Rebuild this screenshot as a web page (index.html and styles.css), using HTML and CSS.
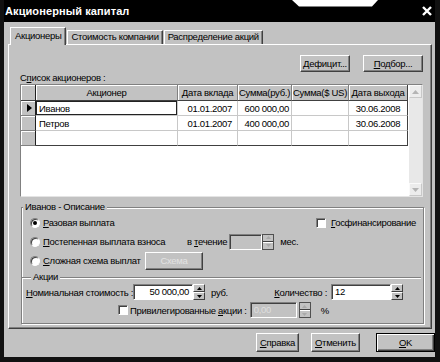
FILE: index.html
```html
<!DOCTYPE html>
<html>
<head>
    <meta charset="utf-8">
    <title>Акционерный капитал</title>
    <link rel="stylesheet" href="styles.css">
</head>
<body>
<div class="window">
    <div class="titlebar">
        <span class="title">Акционерный капитал</span>
        <svg class="close" width="10" height="10" viewBox="0 0 10 10"><path d="M1 1 L9 9 M9 1 L1 9" stroke="#fff" stroke-width="2.4"/></svg>
    </div>
    <svg class="notch" width="86" height="7" viewBox="0 0 86 7"><polygon points="0,0 86,0 80,6.5 7,6.5" fill="#fff"/></svg>

    <div class="tabs">
        <div class="tab active">Акционеры</div>
        <div class="tab">Стоимость компании</div>
        <div class="tab">Распределение акций</div>
    </div>

    <div class="panel">
        <div class="toolbar">
            <button class="btn btn-deficit">Дефицит...</button>
            <button class="btn btn-select"><u>П</u>одбор...</button>
        </div>
        <div class="list-label">С<u>п</u>исок акционеров :</div>

        <div class="grid-box">
            <table class="grid">
                <colgroup>
                    <col style="width:15px">
                    <col style="width:142px">
                    <col style="width:60px">
                    <col style="width:54px">
                    <col style="width:57px">
                    <col style="width:59px">
                </colgroup>
                <thead>
                    <tr>
                        <th class="ind"></th>
                        <th>Акционер</th>
                        <th>Дата вклада</th>
                        <th>Сумма(руб.)</th>
                        <th>Сумма($ US)</th>
                        <th class="last">Дата выхода</th>
                    </tr>
                </thead>
                <tbody>
                    <tr>
                        <td class="ind"><svg width="5" height="8" viewBox="0 0 5 8"><polygon points="0,0 5,4 0,8" fill="#000"/></svg></td>
                        <td class="name focus">Иванов</td>
                        <td class="date">01.01.2007</td>
                        <td class="num">600 000,00</td>
                        <td class="num"></td>
                        <td class="date-out last">30.06.2008</td>
                    </tr>
                    <tr>
                        <td class="ind"></td>
                        <td class="name">Петров</td>
                        <td class="date">01.01.2007</td>
                        <td class="num">400 000,00</td>
                        <td class="num"></td>
                        <td class="date-out last">30.06.2008</td>
                    </tr>
                    <tr class="bottom">
                        <td class="ind"></td>
                        <td class="name"></td>
                        <td class="date"></td>
                        <td class="num"></td>
                        <td class="num"></td>
                        <td class="date-out last"></td>
                    </tr>
                </tbody>
            </table>
            <div class="vscroll">
                <div class="sb-btn"><svg width="7" height="4" viewBox="0 0 7 4"><polygon points="0,4 3.5,0 7,4" fill="#b4b4b4"/></svg></div>
                <div class="sb-track"></div>
                <div class="sb-btn"><svg width="7" height="4" viewBox="0 0 7 4"><polygon points="0,0 3.5,4 7,0" fill="#b4b4b4"/></svg></div>
            </div>
        </div>

        <fieldset class="group">
            <legend>Иванов - Описание</legend>
            <div class="opt-row">
                <span class="radio checked"></span>
                <span><u>Р</u>азовая выплата</span>
                <span class="gosfin"><span class="check"></span><span><u>Г</u>осфинансирование</span></span>
            </div>
            <div class="opt-row">
                <span class="radio"></span>
                <span class="gradual-label"><u>П</u>остепенная выплата взноса</span>
                <span class="term">в <u>т</u>ечение</span>
                <span class="field field-term disabled"></span>
                <span class="spin spin-term">
                    <span class="spin-btn"><svg width="5" height="3" viewBox="0 0 5 3"><polygon points="0,3 2.5,0 5,3" fill="#a8a8a8"/></svg></span>
                    <span class="spin-btn"><svg width="5" height="3" viewBox="0 0 5 3"><polygon points="0,0 2.5,3 5,0" fill="#a8a8a8"/></svg></span>
                </span>
                <span class="unit">мес.</span>
            </div>
            <div class="opt-row">
                <span class="radio"></span>
                <span class="scheme-label"><u>С</u>ложная схема выплат</span>
                <button class="btn btn-scheme" disabled>Схема</button>
            </div>

            <fieldset class="shares">
                <legend>Акции</legend>
                <div class="share-row">
                    <span class="nominal-label"><u>Н</u>оминальная стоимость :</span>
                    <span class="field field-nominal">50 000,00</span>
                    <span class="spin">
                        <span class="spin-btn"><svg width="5" height="3" viewBox="0 0 5 3"><polygon points="0,3 2.5,0 5,3" fill="#000"/></svg></span>
                        <span class="spin-btn"><svg width="5" height="3" viewBox="0 0 5 3"><polygon points="0,0 2.5,3 5,0" fill="#000"/></svg></span>
                    </span>
                    <span class="unit">руб.</span>
                    <span class="qty-label"><u>К</u>оличество :</span>
                    <span class="field field-qty">12</span>
                    <span class="spin">
                        <span class="spin-btn"><svg width="5" height="3" viewBox="0 0 5 3"><polygon points="0,3 2.5,0 5,3" fill="#000"/></svg></span>
                        <span class="spin-btn"><svg width="5" height="3" viewBox="0 0 5 3"><polygon points="0,0 2.5,3 5,0" fill="#000"/></svg></span>
                    </span>
                </div>
                <div class="share-row">
                    <span class="check check-priv"></span>
                    <span class="priv-label">Привилегированные <u>а</u>кции :</span>
                    <span class="field field-priv disabled">0,00</span>
                    <span class="spin spin-priv">
                        <span class="spin-btn"><svg width="5" height="3" viewBox="0 0 5 3"><polygon points="0,3 2.5,0 5,3" fill="#a8a8a8"/></svg></span>
                        <span class="spin-btn"><svg width="5" height="3" viewBox="0 0 5 3"><polygon points="0,0 2.5,3 5,0" fill="#a8a8a8"/></svg></span>
                    </span>
                    <span class="unit unit-pct">%</span>
                </div>
            </fieldset>
        </fieldset>
    </div>

    <div class="footer">
        <button class="btn btn-help"><u>С</u>правка</button>
        <button class="btn btn-cancel"><u>О</u>тменить</button>
        <button class="btn btn-ok"><u>О</u>K</button>
    </div>
</div>
</body>
</html>
```

FILE: styles.css
```css
body {
    margin: 0;
    background: #fff;
    font-family: "Liberation Sans", Arial, sans-serif;
    font-size: 9.5px;
    letter-spacing: -0.3px;
    color: #000;
}
u {
    text-decoration: underline;
    text-underline-offset: 1px;
}
.window {
    position: relative;
    width: 440px;
    height: 362px;
    box-sizing: border-box;
    background: #c2c2c2;
    border-left: 4px solid #111;
    border-right: 5px solid #111;
    border-bottom: 5px solid #111;
    display: flex;
    flex-direction: column;
}
.titlebar {
    height: 22px;
    flex-shrink: 0;
    background: #000;
    color: #fff;
    display: flex;
    align-items: center;
    justify-content: space-between;
    padding: 0 3px 0 1px;
}
.title {
    font-size: 11px;
    font-weight: bold;
    letter-spacing: 0.1px;
}
.notch {
    position: absolute;
    top: 0;
    left: 288px;
}

/* tabs */
.tabs {
    display: flex;
    align-items: flex-end;
    height: 17px;
    margin: 5px 0 0 6px;
    position: relative;
    z-index: 1;
}
.tab {
    height: 14px;
    box-sizing: border-box;
    line-height: 12px;
    padding: 0 3px;
    border: 1px solid;
    border-color: #fff #404040 transparent #fff;
    border-bottom: none;
    box-shadow: inset -1px 0 #808080;
    margin-right: 1px;
    white-space: nowrap;
}
.tab.active {
    height: 18px;
    margin-bottom: -1px;
    padding: 2px 4px 0 4px;
    background: #c2c2c2;
}

.panel {
    margin-left: 4px;
    width: 424px;
    height: 285px;
    box-sizing: border-box;
    border: 1px solid;
    border-color: #fff #404040 #404040 #fff;
    box-shadow: inset -1px -1px #808080;
    padding: 10px 8px 0 11px;
    display: flex;
    flex-direction: column;
}

.btn {
    font: inherit;
    letter-spacing: inherit;
    color: #000;
    background: #c2c2c2;
    border: 1px solid;
    border-color: #fff #404040 #404040 #fff;
    box-shadow: inset -1px -1px #808080;
    padding: 0;
    height: 17px;
    line-height: 13px;
    white-space: nowrap;
}
.toolbar {
    display: flex;
    justify-content: flex-end;
    gap: 13px;
}
.btn-deficit { width: 50px; }
.btn-select { width: 60px; }

.list-label {
    height: 12px;
    line-height: 12px;
}

/* grid */
.grid-box {
    display: flex;
    align-items: flex-start;
    height: 113px;
    box-sizing: border-box;
    background: #fff;
    border: 1px solid;
    border-color: #808080 #e4e4e4 #e4e4e4 #808080;
}
.grid {
    table-layout: fixed;
    width: 387px;
    border-collapse: separate;
    border-spacing: 0;
}
.grid th,
.grid td {
    padding: 0 3px;
    box-sizing: border-box;
    white-space: nowrap;
    overflow: hidden;
}
.grid th {
    height: 16px;
    padding: 0 1px;
    font-weight: normal;
    text-align: center;
    background: #c2c2c2;
    border-right: 1px solid #808080;
    border-bottom: 1px solid #404040;
    box-shadow: inset 1px 1px #fff;
}
.grid td {
    height: 15px;
    border-right: 1px solid #c8c8c8;
    border-bottom: 1px solid #c8c8c8;
}
.grid th.last,
.grid td.last {
    border-right: 1px solid #404040;
}
.grid .bottom td {
    border-bottom: 1px solid #404040;
}
.grid .ind {
    padding: 0;
    background: #c2c2c2;
    border-right: 1px solid #202020;
    box-shadow: inset 1px 1px #fff;
    text-align: center;
}
.grid td.ind {
    border-bottom-color: #808080;
}
.grid td.ind svg {
    display: block;
    margin: 0 0 0 6px;
}
.grid .focus {
    box-shadow: inset 0 0 0 1px #222;
}
.grid .date {
    text-align: right;
    padding-right: 5px;
}
.grid .num {
    text-align: right;
    padding-right: 2px;
}
.grid .date-out {
    text-align: center;
}

.vscroll {
    width: 13px;
    height: 111px;
    margin-left: 1px;
    display: flex;
    flex-direction: column;
    background: #e8e8e8;
}
.sb-btn {
    height: 13px;
    box-sizing: border-box;
    border: 1px solid;
    border-color: #fafafa #c8c8c8 #c8c8c8 #fafafa;
    display: flex;
    align-items: center;
    justify-content: center;
    background: #ececec;
}
.sb-track {
    flex: 1;
}

/* description group */
.group {
    margin: 4px -1px 0 1px;
    padding: 0 7px 4px 8px;
    border: 1px solid #808080;
    box-shadow: inset 1px 1px #fff, 1px 1px #fff;
    min-width: 0;
}
.group > legend {
    margin-left: -7px;
    padding: 0 2px;
    line-height: 12px;
    background: #c2c2c2;
}
.opt-row {
    display: flex;
    align-items: center;
    height: 19px;
    white-space: nowrap;
}
.radio {
    width: 10px;
    height: 10px;
    box-sizing: border-box;
    border-radius: 50%;
    border: 1px solid;
    border-color: #808080 #fff #fff #808080;
    box-shadow: inset 1px 1px #404040;
    background: #fff;
    margin-right: 3px;
    display: flex;
    align-items: center;
    justify-content: center;
}
.radio.checked::after {
    content: "";
    width: 4px;
    height: 4px;
    border-radius: 50%;
    background: #000;
}
.check {
    width: 10px;
    height: 10px;
    box-sizing: border-box;
    border: 1px solid;
    border-color: #808080 #fff #fff #808080;
    box-shadow: inset 1px 1px #404040;
    background: #fff;
    flex-shrink: 0;
}
.gosfin {
    margin-left: auto;
    display: flex;
    align-items: center;
    gap: 5px;
}
.gradual-label {
    width: 138px;
}
.term {
    margin-left: 6px;
}
.field {
    height: 16px;
    box-sizing: border-box;
    border: 1px solid;
    border-color: #808080 #fff #fff #808080;
    box-shadow: inset 1px 1px #404040;
    background: #fff;
    line-height: 14px;
    padding: 0 3px;
}
.field.disabled {
    background: #c2c2c2;
    color: #dedede;
}
.field-term {
    width: 33px;
    margin-left: 2px;
}
.spin {
    width: 12px;
    height: 16px;
    display: flex;
    flex-direction: column;
}
.spin-btn {
    flex: 1;
    box-sizing: border-box;
    border: 1px solid;
    border-color: #fff #404040 #404040 #fff;
    display: flex;
    align-items: center;
    justify-content: center;
}
.spin-term,
.spin-priv {
    outline: 1px solid #505050;
    outline-offset: -1px;
}
.unit {
    margin-left: 6px;
}
.scheme-label {
    width: 94px;
}
.btn-scheme {
    width: 58px;
    height: 18px;
    margin-left: 8px;
    color: #e2e2e2;
}

.shares {
    margin: 1px -5px 0 -8px;
    padding: 0 18px 0 4px;
    border: none;
    border-top: 1px solid #808080;
    box-shadow: inset 0 1px #fff;
    min-width: 0;
}
.shares > legend {
    margin-left: 5px;
    padding: 0 2px;
    line-height: 12px;
    background: #c2c2c2;
}
.share-row {
    display: flex;
    align-items: center;
    height: 18px;
    white-space: nowrap;
}
.nominal-label {
    width: 107px;
}
.field-nominal {
    width: 60px;
    text-align: right;
}
.qty-label {
    margin-left: auto;
    margin-right: 4px;
}
.field-qty {
    width: 60px;
}
.check-priv {
    margin-left: 92px;
}
.priv-label {
    margin: 0 3px 0 2px;
}
.field-priv {
    width: 47px;
}
.spin-priv {
    margin-left: 2px;
}
.unit-pct {
    margin-left: 10px;
}

/* dialog buttons */
.footer {
    display: flex;
    justify-content: flex-end;
    margin-top: 4px;
}
.footer .btn {
    height: 19px;
}
.btn-help { width: 43px; }
.btn-cancel { width: 49px; margin-left: 12px; }
.btn-ok {
    width: 59px;
    margin-left: 16px;
    border: 1px solid #000;
    box-shadow: inset 1px 1px #fff, inset -1px -1px #404040, inset -2px -2px #808080;
}
```
